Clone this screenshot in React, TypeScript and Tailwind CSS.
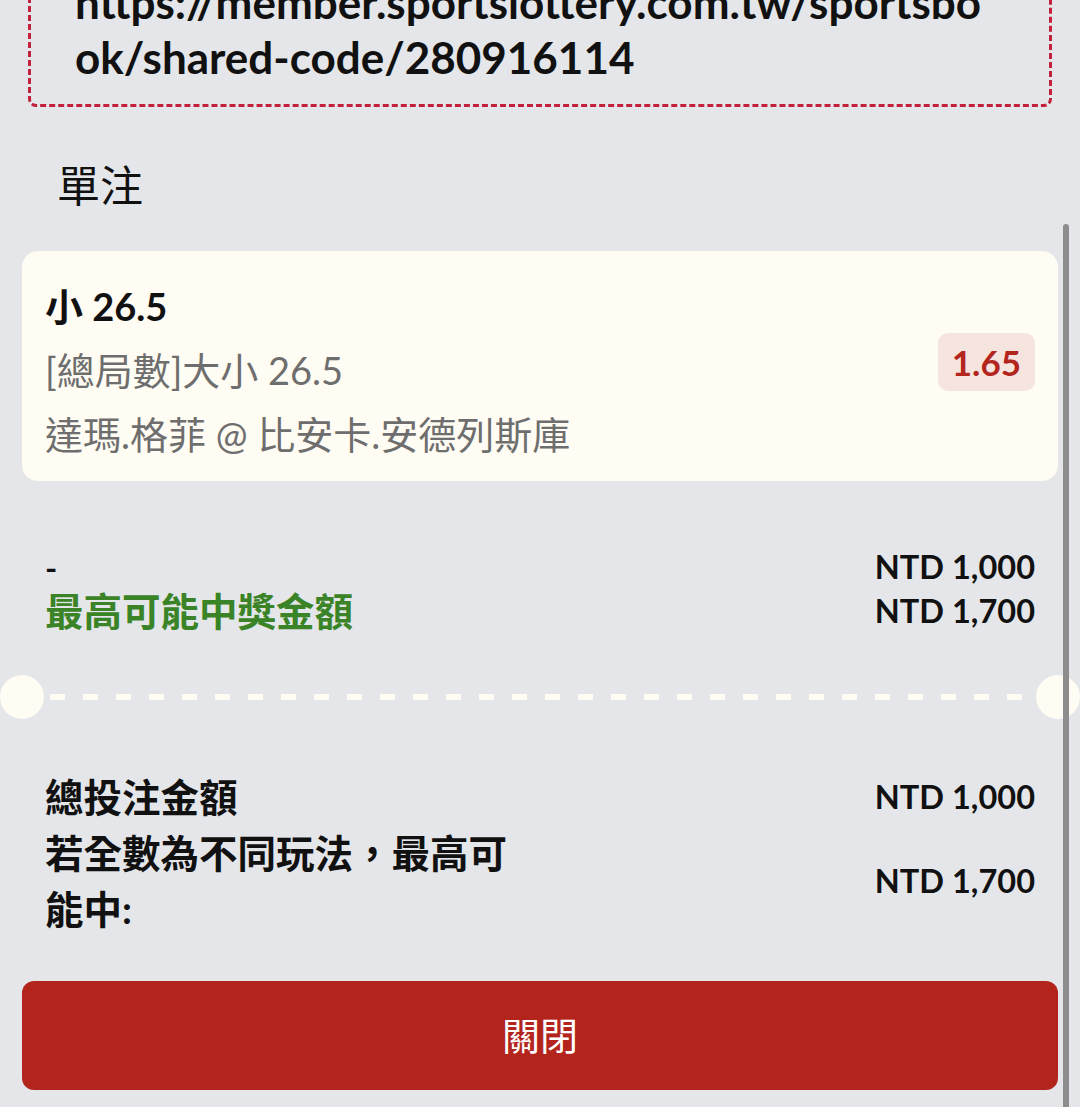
import React from 'react';

const dashes = Array.from({ length: 30 });

export default function App() {
  const summaryRows = [
    { label: '總投注金額', value: 'NTD 1,000' },
    { label: '若全數為不同玩法，最高可能中:', value: 'NTD 1,700' },
  ];

  return (
    <div className="relative min-h-screen w-full overflow-hidden bg-[#e4e6e9] font-['Lato','Noto_Sans_CJK_TC',sans-serif] text-[#111111]">
      {/* shared link box, top is scrolled out of view */}
      <div className="mx-[28px] -mt-[25px] rounded-b-[8px] border-[3px] border-t-0 border-dashed border-[#c2203b] pl-[44px] pr-[50px] pb-[19px]">
        <p className="break-all text-[44px] font-bold leading-[55px]">
          https://member.sportslottery.com.tw/sportsbook/shared-code/280916114
        </p>
      </div>

      <h2 className="ml-[57px] mt-[49px] text-[43px] leading-[60px] font-normal">單注</h2>

      {/* bet card */}
      <div className="mx-[22px] mt-[35px] flex items-center justify-between rounded-[16px] bg-[#fefcf3] pl-[23px] pr-[23px] pt-[23px] pb-[15px]">
        <div className="text-[38px] leading-[64px]">
          <div className="font-bold text-[#111111]">小 26.5</div>
          <div className="text-[#6e6e6e]">[總局數]大小 26.5</div>
          <div className="text-[#6e6e6e]">達瑪.格菲 @ 比安卡.安德列斯庫</div>
        </div>
        <div className="-mt-[16px] rounded-[10px] bg-[#f6e5df] px-[14px] text-[35px] font-bold leading-[58px] text-[#b3261e]">
          1.65
        </div>
      </div>

      {/* stake / payout */}
      <div className="mt-[64px] flex justify-between px-[45px] leading-[44px]">
        <div>
          <div className="text-[33px] font-bold">-</div>
          <div className="text-[38.5px] font-bold text-[#3a8427]">最高可能中獎金額</div>
        </div>
        <div className="text-right text-[32.5px] font-bold">
          <div>NTD 1,000</div>
          <div>NTD 1,700</div>
        </div>
      </div>

      {/* ticket separator */}
      <div className="mt-[42px] flex h-[44px] items-center">
        <div className="h-[44px] w-[44px] shrink-0 rounded-full bg-[#fefcf3]" />
        <div className="ml-[6px] flex flex-1 gap-[18px]">
          {dashes.map((_, i) => (
            <div key={i} className="h-[6px] w-[15px] shrink-0 bg-[#fefcf3]" />
          ))}
        </div>
        <div className="h-[44px] w-[44px] shrink-0 rounded-full bg-[#fefcf3]" />
      </div>

      {/* totals */}
      <div className="mt-[50px] grid grid-cols-[1fr_auto] items-center px-[45px] leading-[56px]">
        {summaryRows.map((row) => (
          <React.Fragment key={row.label}>
            <div className="w-[480px] text-[38.5px] font-bold">{row.label}</div>
            <div className="text-right text-[32.5px] font-bold">{row.value}</div>
          </React.Fragment>
        ))}
      </div>

      <button className="mx-[22px] mt-[44px] flex h-[109px] w-[1036px] items-center justify-center rounded-[12px] bg-[#b3241d] text-[38px] text-white">
        關閉
      </button>

      {/* scroll indicator */}
      <div className="absolute right-[11px] top-[224px] bottom-0 w-[6px] rounded-t-full bg-[#8d8d8d]" />
    </div>
  );
}
